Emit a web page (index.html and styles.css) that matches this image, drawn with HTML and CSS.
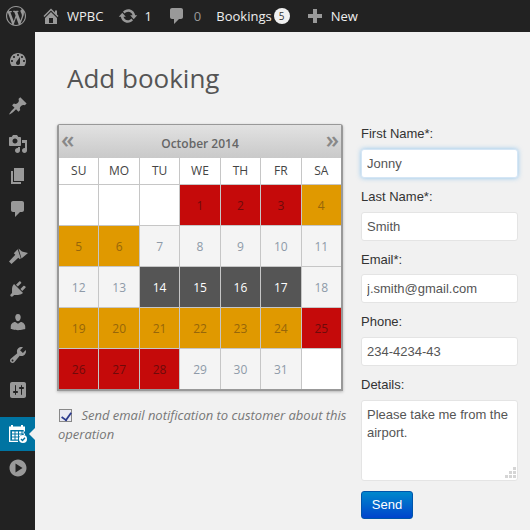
FILE: index.html
```html
<!DOCTYPE html>
<html lang="en">
<head>
    <meta charset="UTF-8">
    <meta name="viewport" content="width=device-width, initial-scale=1.0">
    <title>Add booking</title>
    <link rel="stylesheet" href="styles.css">
</head>
<body>

    <header class="topbar">
        <svg class="bar-logo" viewBox="0 0 20 20"><path d="M20 10c0-5.51-4.49-10-10-10C4.48 0 0 4.49 0 10c0 5.52 4.48 10 10 10 5.51 0 10-4.48 10-10zM7.78 15.37L4.37 6.22c.55-.02 1.17-.08 1.17-.08.5-.06.44-1.13-.06-1.11 0 0-1.45.11-2.37.11-.18 0-.37 0-.58-.01C4.12 2.69 6.87 1.11 10 1.11c2.33 0 4.45.87 6.05 2.34-.68-.11-1.65.39-1.65 1.58 0 .74.45 1.36.9 2.1.35.61.55 1.36.55 2.46 0 1.49-1.4 5-1.4 5l-3.03-8.37c.54-.02.82-.17.82-.17.5-.05.44-1.25-.06-1.22 0 0-1.44.12-2.38.12-.87 0-2.33-.12-2.33-.12-.5-.03-.56 1.2-.06 1.22l.92.08 1.26 3.41zM17.41 10c.24-.64.74-1.87.43-4.25.7 1.29 1.05 2.71 1.05 4.25 0 3.29-1.73 6.24-4.4 7.78.97-2.59 1.94-5.2 2.92-7.78zM6.1 18.09C3.12 16.65 1.11 13.53 1.11 10c0-1.3.23-2.48.72-3.59C3.25 10.3 4.67 14.2 6.1 18.09zm4.03-6.63l2.58 6.98c-.86.29-1.76.45-2.71.45-.79 0-1.57-.11-2.29-.33.81-2.38 1.62-4.74 2.42-7.1z"/></svg>
        <svg class="bar-icon home-icon" viewBox="0 0 20 20"><path d="M16 8.5l1.53 1.53-1.06 1.06L10 4.62l-6.47 6.47-1.06-1.06L10 2.5l4 4v-2h2v4zm-6-2.46l6 5.99V18H4v-5.97zM12 17v-5H8v5h4z"/></svg>
        <span class="bar-text site-name">WPBC</span>
        <svg class="bar-icon update-icon" viewBox="0 0 20 20"><path d="M10.2 3.28c3.53 0 6.43 2.61 6.92 6h2.08l-3.5 4-3.5-4h2.32c-.45-1.97-2.21-3.45-4.32-3.45-1.45 0-2.73.71-3.54 1.78L4.95 5.66C6.23 4.2 8.11 3.28 10.2 3.28zm-.4 13.44c-3.52 0-6.43-2.61-6.92-6H.8l3.5-4c1.17 1.33 2.33 2.67 3.5 4H5.48c.45 1.97 2.21 3.45 4.32 3.45 1.45 0 2.73-.71 3.54-1.78l1.71 1.95c-1.28 1.46-3.15 2.38-5.25 2.38z"/></svg>
        <span class="bar-text update-count">1</span>
        <svg class="bar-icon comment-icon" viewBox="0 0 20 20"><path d="M5 2h9c1.1 0 2 .9 2 2v7c0 1.1-.9 2-2 2h-2l-5 5v-5H5c-1.1 0-2-.9-2-2V4c0-1.1.9-2 2-2z"/></svg>
        <span class="bar-text muted comment-count">0</span>
        <span class="bar-text bookings-link">Bookings</span>
        <span class="badge">5</span>
        <svg class="bar-icon plus-icon" viewBox="0 0 20 20"><path d="M8 3h4v5h5v4h-5v5H8v-5H3V8h5z"/></svg>
        <span class="bar-text new-link">New</span>
    </header>

    <div class="layout">
        <nav class="sidebar">
            <a class="menu-item first"><svg viewBox="0 0 20 20"><path fill-rule="evenodd" d="M3.76 16h12.48c1.1-1.37 1.76-3.11 1.76-5 0-4.42-3.58-8-8-8s-8 3.58-8 8c0 1.89.66 3.63 1.76 5zM10 4c.55 0 1 .45 1 1s-.45 1-1 1-1-.45-1-1 .45-1 1-1zM6 6c.55 0 1 .45 1 1s-.45 1-1 1-1-.45-1-1 .45-1 1-1zm8 0c.55 0 1 .45 1 1s-.45 1-1 1-1-.45-1-1 .45-1 1-1zm-5.37 5.55L12 7v6c0 1.1-.9 2-2 2s-2-.9-2-2c0-.57.24-1.08.63-1.45zM4 10c.55 0 1 .45 1 1s-.45 1-1 1-1-.45-1-1 .45-1 1-1zm12 0c.55 0 1 .45 1 1s-.45 1-1 1-1-.45-1-1 .45-1 1-1z"/></svg></a>
            <a class="menu-item pin-item"><svg viewBox="0 0 20 20"><path d="M10.44 3.02l1.82-1.82 6.36 6.35-1.83 1.82c-1.05-.68-2.48-.57-3.41.36l-.75.75c-.92.93-1.04 2.35-.35 3.41l-1.83 1.82-2.41-2.41-2.8 2.79c-.42.42-3.38 2.71-3.8 2.29s1.86-3.39 2.28-3.81l2.79-2.79L4.1 9.36l1.83-1.82c1.05.69 2.48.57 3.41-.36l.75-.75c.93-.92 1.05-2.35.35-3.41z"/></svg></a>
            <a class="menu-item media-item"><svg viewBox="0 0 20 20"><path fill-rule="evenodd" d="M13 11V4c0-.55-.45-1-1-1h-1.67L9 1H5L3.67 3H2c-.55 0-1 .45-1 1v7c0 .55.45 1 1 1h10c.55 0 1-.45 1-1zM7 4.5c1.38 0 2.5 1.12 2.5 2.5S8.38 9.5 7 9.5 4.5 8.38 4.5 7 5.62 4.5 7 4.5zM14 6h5v10.5c0 1.38-1.12 2.5-2.5 2.5S14 17.88 14 16.5s1.12-2.5 2.5-2.5c.17 0 .34.02.5.05V9h-3V6zm-4 8.05V13h2v3.5c0 1.38-1.12 2.5-2.5 2.5S7 17.88 7 16.5 8.12 14 9.5 14c.17 0 .34.02.5.05z"/></svg></a>
            <a class="menu-item"><svg viewBox="0 0 20 20"><path d="M6 15V2h10v13H6zm-1 1h8v2H3V5h2v11z"/></svg></a>
            <a class="menu-item"><svg viewBox="0 0 20 20"><path d="M5 2h9c1.1 0 2 .9 2 2v7c0 1.1-.9 2-2 2h-2l-5 5v-5H5c-1.1 0-2-.9-2-2V4c0-1.1.9-2 2-2z"/></svg></a>
            <a class="menu-item brush-item"><svg viewBox="0 0 20 20"><path d="M10.500 2.500l3.500 3 6 1.500-6.500 5.500zM9.700 3.300L5.800 7.200l1.500 1.500L1 15.500 3.500 18l6.800-6.300 1.500 1.500 1-1z"/></svg></a>
            <a class="menu-item plug-item"><svg viewBox="0 0 20 20"><path d="M13.11 4.36L9.87 7.6 8 5.73l3.24-3.24c.35-.34 1.05-.2 1.56.32.52.51.66 1.21.31 1.55zm-8 1.77l.91-1.12 9.01 9.01-1.19.84c-.71.71-2.63 1.16-3.82 1.16H6.14L4.9 17.26c-.59.59-1.54.59-2.12 0-.59-.58-.59-1.53 0-2.12l1.24-1.24v-3.88c0-1.13.4-3.19 1.09-3.89zm7.26 3.97l3.24-3.24c.34-.35 1.04-.21 1.55.31.52.51.66 1.21.31 1.55l-3.24 3.25z"/></svg></a>
            <a class="menu-item"><svg viewBox="0 0 20 20"><path d="M10 9.25c-2.27 0-2.73-3.44-2.73-3.44C7 4.02 7.82 2 9.97 2c2.16 0 2.98 2.02 2.71 3.81 0 0-.41 3.44-2.68 3.44zm0 2.57L12.72 10c2.39 0 4.52 2.33 4.52 4.53v2.49s-3.65 1.13-7.24 1.13c-3.65 0-7.24-1.13-7.24-1.13v-2.49c0-2.25 1.94-4.48 4.47-4.48z"/></svg></a>
            <a class="menu-item"><svg viewBox="0 0 20 20"><path fill-rule="evenodd" d="M16.68 9.77c-1.34 1.34-3.3 1.67-4.95.99l-5.41 6.52c-.99.99-2.59.99-3.58 0s-.99-2.59 0-3.57l6.52-5.42c-.68-1.65-.35-3.61.99-4.95 1.28-1.28 3.12-1.62 4.72-1.06l-2.89 2.89 2.82 2.82 2.86-2.87c.53 1.58.18 3.39-1.08 4.65zM3.81 16.21c.4.39 1.04.39 1.43 0 .4-.4.4-1.04 0-1.43-.39-.4-1.03-.4-1.43 0-.39.39-.39 1.03 0 1.43z"/></svg></a>
            <a class="menu-item settings-item"><svg viewBox="0 0 20 20"><path fill-rule="evenodd" d="M18 16V4c0-1.1-.9-2-2-2H4c-1.100 0-2 .9-2 2v12c0 1.100.9 2 2 2h12c1.100 0 2-.9 2-2zM8 11h1c.55 0 1 .45 1 1s-.45 1-1 1H8v1.500c0 .28-.22.5-.5.5s-.5-.22-.5-.5V13H6c-.55 0-1-.45-1-1s.45-1 1-1h1V5.500c0-.28.22-.5.5-.5s.5.22.5.5V11zm5-2h-1c-.55 0-1-.45-1-1s.45-1 1-1h1V5.500c0-.28.22-.5.5-.5s.5.22.5.5V7h1c.55 0 1 .45 1 1s-.45 1-1 1h-1v5.500c0 .28-.22.5-.5.5s-.5-.22-.5-.5V9z"/></svg></a>
            <a class="menu-item active">
                <svg viewBox="0 0 20 20"><path fill-rule="evenodd" d="M1 2.500h2V1h2v1.500h8V1h2v1.500h2v8.500h-1.300V6H2.300v10.700H10V18H1zM4 7.500h2.500v2H4zm3.500 0H10v2H7.500zM11 7.500h2.500v2H11zm3.500 0H17v2h-2.500zM4 10.500h2.500v2H4zm3.500 0H10v2H7.500zM11 10.500h2.500v.6L11 12.500zM4 13.500h2.500v2H4zm3.500 0H10v2H7.500z"/><circle cx="15" cy="15" r="4"/><path class="tick" d="M13 15l1.500 1.500 2.500-2.700"/></svg>
            </a>
            <a class="menu-item"><svg viewBox="0 0 20 20"><path fill-rule="evenodd" d="M10 1.500c4.700 0 8.500 3.800 8.500 8.500s-3.800 8.500-8.500 8.500-8.500-3.800-8.500-8.500 3.800-8.500 8.500-8.500zM7.500 14.500l7-4.500-7-4.500z"/></svg></a>
        </nav>

        <main class="content">
            <h1 class="page-title">Add booking</h1>

            <div class="columns">
                <section class="left-col">
                    <div class="calendar">
                        <div class="cal-head">
                            <span class="cal-arrow">«</span>
                            <span class="cal-title">October 2014</span>
                            <span class="cal-arrow">»</span>
                        </div>
                        <div class="cal-grid">
                            <div class="wd">SU</div><div class="wd">MO</div><div class="wd">TU</div><div class="wd">WE</div><div class="wd">TH</div><div class="wd">FR</div><div class="wd">SA</div>

                            <div class="day"></div><div class="day"></div><div class="day"></div>
                            <div class="day red">1</div><div class="day red">2</div><div class="day red">3</div><div class="day orange">4</div>

                            <div class="day orange">5</div><div class="day orange">6</div><div class="day free">7</div><div class="day free">8</div><div class="day free">9</div><div class="day free">10</div><div class="day free">11</div>

                            <div class="day free">12</div><div class="day free">13</div><div class="day dark">14</div><div class="day dark">15</div><div class="day dark">16</div><div class="day dark">17</div><div class="day free">18</div>

                            <div class="day orange">19</div><div class="day orange">20</div><div class="day orange">21</div><div class="day orange">22</div><div class="day orange">23</div><div class="day orange">24</div><div class="day red">25</div>

                            <div class="day red">26</div><div class="day red">27</div><div class="day red">28</div><div class="day free">29</div><div class="day free">30</div><div class="day free">31</div><div class="day"></div>
                        </div>
                    </div>

                    <label class="notify">
                        <input type="checkbox" checked>
                        Send email notification to customer about this operation
                    </label>
                </section>

                <form class="booking-form">
                    <label class="field-label">First Name*:</label>
                    <input class="field focused" type="text" value="Jonny">
                    <label class="field-label">Last Name*:</label>
                    <input class="field" type="text" value="Smith">
                    <label class="field-label">Email*:</label>
                    <input class="field" type="text" value="j.smith@gmail.com">
                    <label class="field-label">Phone:</label>
                    <input class="field" type="text" value="234-4234-43">
                    <label class="field-label">Details:</label>
                    <div class="details-wrap">
                        <textarea class="field details">Please take me from the airport.</textarea>
                        <svg class="grip" width="12" height="12" viewBox="0 0 12 12"><path d="M8 0h3v3H8zM4 4h3v3H4zM8 4h3v3H8zM0 8h3v3H0zM4 8h3v3H4zM8 8h3v3H8z"/></svg>
                    </div>
                    <button class="send-btn" type="button">Send</button>
                </form>
            </div>
        </main>
    </div>

</body>
</html>
```

FILE: styles.css
```css
* {
    box-sizing: border-box;
}

body {
    margin: 0;
    width: 530px;
    height: 530px;
    overflow: hidden;
    font-family: "Open Sans", sans-serif;
    background-color: #f1f1f1;
}

/* top admin bar */
.topbar {
    height: 32px;
    background-color: #222;
    display: flex;
    align-items: center;
    padding-left: 6px;
}

.topbar svg {
    fill: #999;
    flex: none;
}

.bar-logo {
    width: 20px;
    height: 20px;
}

.bar-icon {
    width: 20px;
    height: 20px;
}

.home-icon { margin-left: 15px; }
.update-icon { margin-left: 15px; }
.comment-icon { margin-left: 15px; }
.plus-icon { margin-left: 15px; }

.bar-text {
    font-size: 13px;
    color: #eee;
    margin-left: 7px;
}

.bar-text.muted {
    color: #999;
}

.site-name { margin-left: 6px; }
.update-count { margin-left: 6px; }
.comment-count { margin-left: 7px; }
.bookings-link { margin-left: 15px; }
.bar-text.new-link { margin-left: 6px; }

.badge {
    width: 16px;
    height: 16px;
    margin-left: 2px;
    border-radius: 50%;
    background-color: #f1f1f1;
    color: #333;
    font-size: 10px;
    line-height: 16px;
    text-align: center;
}

.layout {
    display: flex;
    height: 498px;
}

/* left menu */
.sidebar {
    width: 35px;
    flex: none;
    background-color: #222;
    padding-top: 11px;
    display: flex;
    flex-direction: column;
}

.menu-item {
    height: 33px;
    display: flex;
    align-items: center;
    justify-content: center;
    position: relative;
    flex: none;
}

.menu-item svg {
    width: 20px;
    height: 20px;
    fill: #999;
}

.pin-item { margin-top: 13px; }
.media-item { margin-top: 5px; margin-bottom: -1px; }
.brush-item { margin-top: 14px; }
.settings-item { margin-top: 2px; }

.menu-item.active {
    height: 34px;
    margin-top: 11px;
    background-color: #0074a2;
}

.menu-item.active svg {
    fill: #fff;
}

.menu-item.active .tick {
    fill: none;
    stroke: #0074a2;
    stroke-width: 1.4;
}

.menu-item.active::after {
    content: "";
    position: absolute;
    right: 0;
    top: 11px;
    border: 6px solid transparent;
    border-left-width: 0;
    border-right-color: #f1f1f1;
}

/* page content */
.content {
    flex: 1;
    padding: 0 12px 0 22px;
}

.page-title {
    margin: 25px 0 0 10px;
    font-size: 26px;
    font-weight: 400;
    line-height: 42px;
    color: #555;
}

.columns {
    display: flex;
    margin-top: 25px;
}

.left-col {
    width: 304px;
    flex: none;
}

/* calendar */
.calendar {
    width: 286px;
    border: 2px solid #999;
    border-top-width: 1px;
    border-radius: 3px 3px 0 0;
    box-shadow: 0 1px 3px rgba(0, 0, 0, 0.25);
    background-color: #c6c6c6;
}

.cal-head {
    height: 33px;
    display: flex;
    justify-content: space-between;
    padding: 0 2px;
    background: linear-gradient(#e2e2e2, #c9c9c9);
}

.cal-arrow {
    font-size: 24px;
    line-height: 28px;
    color: #888;
    font-weight: 600;
}

.cal-title {
    font-size: 12px;
    font-weight: 600;
    line-height: 38px;
    color: #666;
}

.cal-grid {
    display: grid;
    grid-template-columns: repeat(7, 1fr);
    grid-template-rows: 26px repeat(5, 40px);
    gap: 1px;
}

.wd {
    background-color: #fff;
    font-size: 12px;
    line-height: 26px;
    text-align: center;
    color: #444;
}

.day {
    background-color: #fff;
    font-size: 12px;
    line-height: 42px;
    text-align: center;
}

.day.red {
    background-color: #c50a0a;
    color: #6e0a0a;
}

.day.orange {
    background-color: #e09900;
    color: #96660a;
}

.day.dark {
    background-color: #555;
    color: #fff;
}

.day.free {
    background-color: #f4f4f4;
    color: #8e9aa8;
}

.notify {
    display: block;
    margin: 15px 0 0 1px;
    font-size: 13px;
    font-style: italic;
    line-height: 19px;
    color: #777;
}

.notify input {
    appearance: none;
    position: relative;
    width: 13px;
    height: 13px;
    margin: 0 6px 0 1px;
    border: 1px solid #888;
    background-color: #e9e9f2;
    vertical-align: -2px;
}

.notify input::after {
    content: "";
    position: absolute;
    left: 3px;
    top: 0;
    width: 5px;
    height: 9px;
    border: solid #2b3a8c;
    border-width: 0 2px 2px 0;
    transform: rotate(35deg) scale(0.9);
}

/* form on the right */
.booking-form {
    width: 157px;
    flex: none;
    font-family: "Liberation Sans", Arial, sans-serif;
}

.field-label {
    display: block;
    height: 24.75px;
    font-size: 13px;
    line-height: 20px;
    color: #333;
}

.field {
    display: block;
    width: 100%;
    height: 29px;
    margin-bottom: 9px;
    padding: 0 5px;
    border: 1px solid #e4e4e4;
    border-radius: 3px;
    background-color: #fff;
    font-family: inherit;
    font-size: 13px;
    color: #555;
}

.field.focused {
    border-color: #d5e6f5;
    box-shadow: 0 0 5px rgba(82, 168, 236, 0.6);
}

.details-wrap {
    position: relative;
}

.details {
    height: 81px;
    padding: 5px;
    line-height: 18px;
    resize: none;
    overflow: hidden;
}

.grip {
    position: absolute;
    right: 1px;
    bottom: 2px;
    fill: #d5d5d5;
}

.send-btn {
    display: block;
    width: 52px;
    height: 28px;
    margin-top: 10px;
    padding: 0;
    border: 1px solid #0055aa;
    border-radius: 3px;
    background: linear-gradient(#0088cc, #0044cc);
    color: #fff;
    font-family: inherit;
    font-size: 13px;
}
```
